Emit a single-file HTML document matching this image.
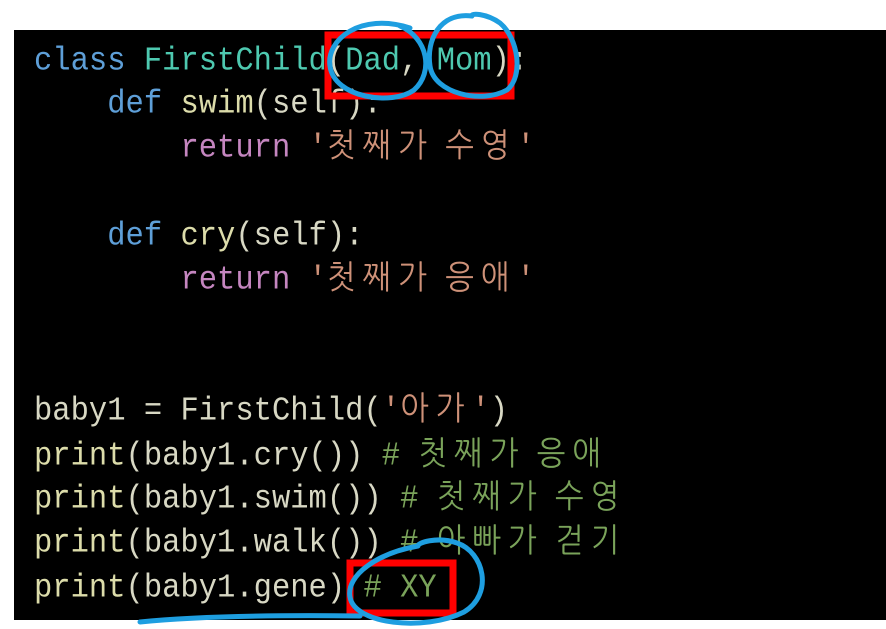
<!DOCTYPE html>
<html><head><meta charset="utf-8"><style>
html,body{margin:0;padding:0;background:#fff;width:886px;height:629px;overflow:hidden;position:relative}
#code{position:absolute;left:14px;top:30px;width:872px;height:590px;background:#000}
.l{position:absolute;left:34px;font-family:"Liberation Mono","NanumGothic","Noto Sans CJK KR",monospace;font-size:30.5px;line-height:44px;white-space:pre;color:#dcdcc8;transform:scaleY(1.08);transform-origin:left top}
.k{color:#5e9fd8}.c{color:#4ec9b0}.f{color:#dcdcaa}.r{color:#c586c0}.s{color:#ce9178}.g{color:#7aa35a}.w{color:#d8d8c4}
.kr{letter-spacing:7px}.kr i{letter-spacing:0;font-style:normal}
svg{position:absolute;left:0;top:0}
</style></head><body>
<div id="code"></div>
<div class="l" style="top:38px"><span class="k">class</span> <span class="c">FirstChild</span><span class="w">(</span><span class="c">Dad</span><span class="w">, </span><span class="c">Mom</span><span class="w">):</span></div>
<div class="l" style="top:81px">    <span class="k">def</span> <span class="f">swim</span><span class="w">(self):</span></div>
<div class="l" style="top:125px">        <span class="r">return</span> <span class="s">'<span class="kr">첫째<i>가 </i>수영</span>'</span></div>
<div class="l" style="top:213px">    <span class="k">def</span> <span class="f">cry</span><span class="w">(self):</span></div>
<div class="l" style="top:257px">        <span class="r">return</span> <span class="s">'<span class="kr">첫째<i>가 </i>응애</span>'</span></div>
<div class="l" style="top:388px"><span class="w">baby1 = </span><span class="w">FirstChild(</span><span class="s">'<span class="kr">아가</span>'</span><span class="w">)</span></div>
<div class="l" style="top:433px"><span class="f">print</span><span class="w">(baby1.cry()) </span><span class="g"># <span class="kr">첫째<i>가 </i>응애</span></span></div>
<div class="l" style="top:476px"><span class="f">print</span><span class="w">(baby1.swim()) </span><span class="g"># <span class="kr">첫째<i>가 </i>수영</span></span></div>
<div class="l" style="top:520px"><span class="f">print</span><span class="w">(baby1.walk()) </span><span class="g"># <span class="kr">아빠<i>가 </i>걷기</span></span></div>
<div class="l" style="top:565px"><span class="f">print</span><span class="w">(baby1.gene) </span><span class="g"># XY</span></div>
<svg width="886" height="629" viewBox="0 0 886 629">
<rect x="328" y="35" width="183" height="61" fill="none" stroke="#f00" stroke-width="7"/>
<rect x="350" y="563" width="103" height="50" fill="none" stroke="#f00" stroke-width="7"/>
<g fill="none" stroke="#1e9ee0" stroke-width="5" stroke-linecap="round">
<path d="M410 28 C360 12 326 40 330 66 C334 98 392 106 414 90 C434 72 428 38 400 26"/>
<path d="M472 16 C440 12 426 40 430 66 C434 94 482 104 507 90 C524 76 518 38 500 23 C486 13 470 13 472 16"/>
<path d="M418 546 C378 553 346 575 350 597 C354 624 424 632 464 612 C494 594 484 552 457 543 C437 536 417 543 418 546"/>
<path d="M140 622 C200 616 280 615 360 616"/>
</g>
</svg>
</body></html>
